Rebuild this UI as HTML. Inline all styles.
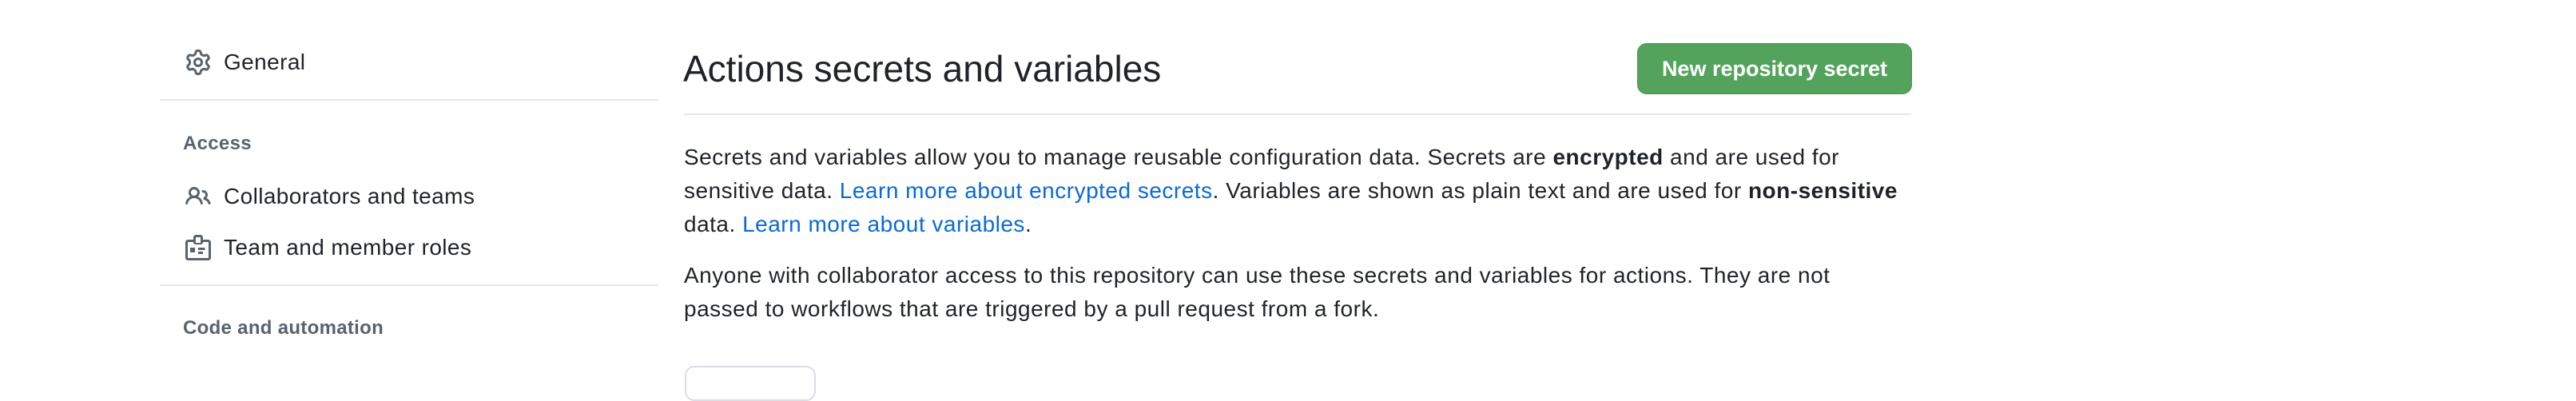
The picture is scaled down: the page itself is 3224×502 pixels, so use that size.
<!DOCTYPE html>
<html><head><style>
html,body{margin:0;padding:0;background:#fff;width:3224px;height:464px;overflow:hidden;font-family:"Liberation Sans",sans-serif;color:#1f2328}
.a{position:absolute}
.nav{font-size:28px;line-height:32px;color:#1f2328;letter-spacing:0.4px}
.sec{font-size:24px;font-weight:bold;color:#59636e;letter-spacing:0.3px}
.hr{position:absolute;height:2px;background:#e5e8eb}
p{margin:0;font-size:28px;line-height:42px}
a{color:#0969da;text-decoration:none}
svg{position:absolute}
</style></head><body>
<svg style="left:232px;top:62px" width="32" height="32" viewBox="0 0 16 16" fill="#59636e"><path d="M8 0a8.2 8.2 0 0 1 .701.031C9.444.095 9.990.645 10.160 1.290l.288 1.107c.018.066.079.158.212.224.231.114.454.243.668.386.123.082.233.090.299.071l1.103-.303c.644-.176 1.392.021 1.820.630.270.385.506.792.704 1.218.315.675.111 1.422-.364 1.891l-.814.806c-.049.048-.098.147-.088.294.016.257.016.515 0 .772-.010.147.038.246.088.294l.814.806c.475.469.679 1.216.364 1.891a7.977 7.977 0 0 1-.704 1.217c-.428.610-1.176.807-1.820.630l-1.102-.302c-.067-.019-.177-.011-.300.071a5.909 5.909 0 0 1-.668.386c-.133.066-.194.158-.211.224l-.290 1.106c-.168.646-.715 1.196-1.458 1.260a8.006 8.006 0 0 1-1.402 0c-.743-.064-1.289-.614-1.458-1.260l-.289-1.106c-.018-.066-.079-.158-.212-.224a5.738 5.738 0 0 1-.668-.386c-.123-.082-.233-.090-.299-.071l-1.103.303c-.644.176-1.392-.021-1.820-.630a8.12 8.12 0 0 1-.704-1.218c-.315-.675-.111-1.422.363-1.891l.815-.806c.050-.048.098-.147.088-.294a6.214 6.214 0 0 1 0-.772c.010-.147-.038-.246-.088-.294l-.815-.806C.635 6.045.431 5.298.746 4.623a7.92 7.92 0 0 1 .704-1.217c.428-.610 1.176-.807 1.820-.630l1.102.302c.067.019.177.011.300-.071.214-.143.437-.272.668-.386.133-.066.194-.158.211-.224l.290-1.106C6.009.645 6.556.095 7.299.030 7.530.010 7.764 0 8 0Zm-.571 1.525c-.036.003-.108.036-.137.146l-.289 1.105c-.147.561-.549.967-.998 1.189-.173.086-.340.183-.500.290-.417.278-.970.423-1.529.270l-1.103-.303c-.109-.030-.175.016-.195.045-.220.312-.412.644-.573.990-.014.031-.021.110.059.190l.815.806c.411.406.562.957.530 1.456a4.709 4.709 0 0 0 0 .582c.032.499-.119 1.050-.530 1.456l-.815.806c-.081.080-.073.159-.059.190.162.346.353.677.573.989.020.030.085.076.195.046l1.102-.303c.560-.153 1.113-.008 1.530.270.161.107.328.204.501.290.447.222.850.629.997 1.189l.289 1.105c.029.109.101.143.137.146a6.6 6.6 0 0 0 1.142 0c.036-.003.108-.036.137-.146l.289-1.105c.147-.561.549-.967.998-1.189.173-.086.340-.183.500-.290.417-.278.970-.423 1.529-.270l1.103.303c.109.029.175-.016.195-.045.220-.313.411-.644.573-.990.014-.031.021-.110-.059-.190l-.815-.806c-.411-.406-.562-.957-.530-1.456a4.709 4.709 0 0 0 0-.582c-.032-.499.119-1.050.530-1.456l.815-.806c.081-.080.073-.159.059-.190a6.464 6.464 0 0 0-.573-.989c-.020-.030-.085-.076-.195-.046l-1.102.303c-.560.153-1.113.008-1.530-.270a4.44 4.44 0 0 0-.501-.290c-.447-.222-.850-.629-.997-1.189l-.289-1.105c-.029-.110-.101-.143-.137-.146a6.6 6.6 0 0 0-1.142 0ZM11 8a3 3 0 1 1-6 0 3 3 0 0 1 6 0ZM9.5 8a1.5 1.5 0 1 0-3.001.001A1.5 1.5 0 0 0 9.5 8Z"/></svg>
<div class="a nav" style="left:280px;top:62px">General</div>
<div class="hr" style="left:200px;top:124px;width:624px"></div>
<div class="a sec" style="left:229px;top:166px">Access</div>
<svg style="left:232px;top:230px" width="32" height="32" viewBox="0 0 16 16" fill="#59636e"><path d="M2 5.5a3.5 3.5 0 1 1 5.898 2.549 5.508 5.508 0 0 1 3.034 4.084.75.75 0 1 1-1.482.235 4 4 0 0 0-7.900 0 .75.75 0 0 1-1.482-.236A5.507 5.507 0 0 1 3.102 8.050 3.493 3.493 0 0 1 2 5.5ZM11 4a3.001 3.001 0 0 1 2.220 5.018 5.010 5.010 0 0 1 2.560 3.012.749.749 0 0 1-.885.954.752.752 0 0 1-.549-.514 3.507 3.507 0 0 0-2.522-2.372.75.75 0 0 1-.574-.730v-.352a.75.75 0 0 1 .416-.672A1.5 1.5 0 0 0 11 5.5.75.75 0 0 1 11 4Zm-5.5-.5a2 2 0 1 0-.001 3.999A2 2 0 0 0 5.5 3.5Z"/></svg>
<div class="a nav" style="left:280px;top:230px">Collaborators and teams</div>
<svg style="left:232px;top:294px" width="32" height="32" viewBox="0 0 16 16" fill="#59636e"><path d="M6.5 0h3A1.5 1.5 0 0 1 11 1.5V3h3.25c.966 0 1.75.784 1.75 1.75v9.5A1.75 1.75 0 0 1 14.25 16H1.75A1.75 1.75 0 0 1 0 14.25v-9.5C0 3.784.784 3 1.75 3H5V1.5A1.5 1.5 0 0 1 6.5 0Zm-4.75 4.5a.25.25 0 0 0-.25.25v9.5c0 .138.112.25.25.25h12.5a.25.25 0 0 0 .25-.25v-9.5a.25.25 0 0 0-.25-.25H11v.5A1.5 1.5 0 0 1 9.5 6h-3A1.5 1.5 0 0 1 5 5v-.5ZM6.5 1.5V5h3V1.5ZM3 8h3v3H3Zm5 0h4.25v1.5H8Zm0 2.5h3v1.5H8Z"/></svg>
<div class="a nav" style="left:280px;top:294px">Team and member roles</div>
<div class="hr" style="left:200px;top:356px;width:624px"></div>
<div class="a sec" style="left:229px;top:397px">Code and automation</div>

<div class="a" style="left:855px;top:54px;font-size:46px;line-height:64px;letter-spacing:0px">Actions secrets and variables</div>
<div class="a" style="left:2049px;top:54px;width:342px;height:62px;background:#53a35c;border:1px solid #4a9353;border-radius:12px;color:#fff;font-weight:bold;font-size:27px;line-height:62px;text-align:center">New repository secret</div>
<div class="hr" style="left:856px;top:142px;width:1536px"></div>
<div class="a" style="left:856px;top:176px;width:1640px;letter-spacing:0.5px">
<p>Secrets and variables allow you to manage reusable configuration data. Secrets are <b>encrypted</b> and are used for<br>sensitive data. <a>Learn more about encrypted secrets</a>. Variables are shown as plain text and are used for <b>non-sensitive</b><br>data. <a>Learn more about variables</a>.</p>
<p style="margin-top:22px">Anyone with collaborator access to this repository can use these secrets and variables for actions. They are not<br>passed to workflows that are triggered by a pull request from a fork.</p>
</div>
<div class="a" style="left:857px;top:458px;width:160px;height:40px;border:2px solid #d8dee4;border-radius:12px"></div>
</body></html>
